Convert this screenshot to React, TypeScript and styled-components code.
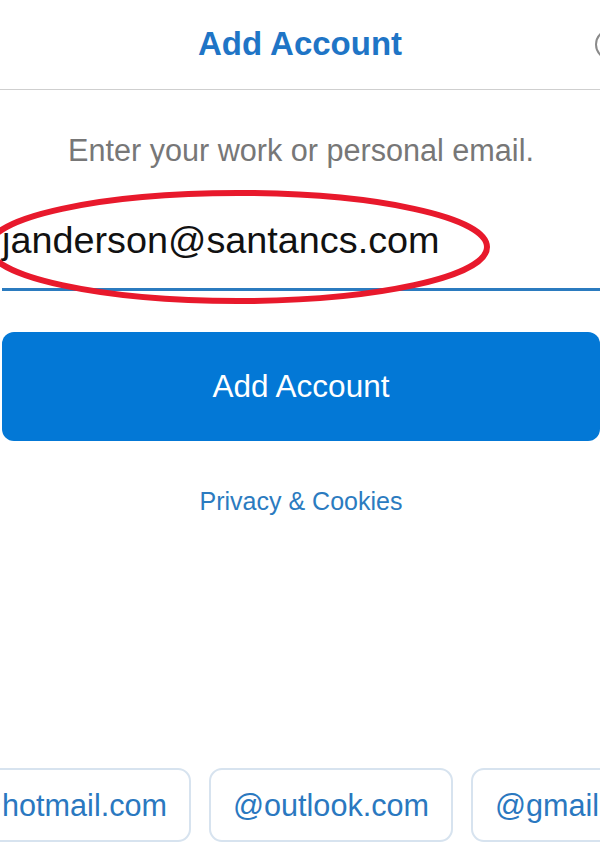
import React from "react";
import styled, { createGlobalStyle } from "styled-components";

const Global = createGlobalStyle`
  html, body { margin: 0; padding: 0; background: #fff; }
  body { font-family: "Liberation Sans", Arial, sans-serif; overflow: hidden; }
  * { box-sizing: border-box; }
`;

const Page = styled.div`
  width: 600px;
  height: 854px;
  display: flex;
  flex-direction: column;
  overflow: hidden;
  position: relative;
`;

const Header = styled.header`
  height: 90px;
  border-bottom: 1px solid #cfcfcf;
  display: flex;
  align-items: center;
  justify-content: center;
  position: relative;
`;

const Title = styled.h1`
  margin: 0;
  font-size: 33px;
  font-weight: 700;
  color: #1f75c6;
  margin-top: -1px;
`;

const HelpButton = styled.div`
  position: absolute;
  right: -26px;
  top: 29px;
  width: 31px;
  height: 31px;
  border-radius: 50%;
  border: 2px solid #8a8a8a;
`;

const Body = styled.main`
  display: flex;
  flex-direction: column;
  padding: 0 0 0 2px;
`;

const Prompt = styled.p`
  margin: 42px 0 0;
  text-align: center;
  font-size: 30.6px;
  color: #777;
  line-height: 36px;
`;

const Field = styled.div`
  position: relative;
  margin-top: 33px;
  height: 90px;
  padding-bottom: 9px;
  border-bottom: 3px solid #2b7bbf;
  display: flex;
  align-items: center;
`;

const EmailText = styled.span`
  font-size: 37.8px;
  color: #111;
`;

const Annotation = styled.svg`
  position: absolute;
  left: -2px;
  top: 0;
  overflow: visible;
  pointer-events: none;
`;

const PrimaryButton = styled.button`
  margin-top: 41px;
  height: 109px;
  width: 100%;
  border: none;
  border-radius: 12px;
  background: #0378d6;
  color: #fff;
  font-family: inherit;
  font-size: 31.5px;
`;

const LinkText = styled.a`
  margin-top: 46px;
  align-self: center;
  font-size: 25px;
  color: #2b7bc0;
  text-decoration: none;
`;

const ChipRow = styled.div`
  margin-top: auto;
  margin-bottom: 12px;
  display: flex;
  gap: 18px;
  margin-left: -53px;
`;

const Chip = styled.div`
  flex: none;
  height: 74px;
  padding: 0 22px;
  border: 2px solid #d7e3ef;
  border-radius: 13px;
  display: flex;
  align-items: center;
  font-size: 30.6px;
  color: #2a78c0;
`;

export default function App() {
  return (
    <Page>
      <Global />
      <Header>
        <Title>Add Account</Title>
        <HelpButton />
      </Header>
      <Body>
        <Prompt>Enter your work or personal email.</Prompt>
        <Field>
          <EmailText>janderson@santancs.com</EmailText>
          <Annotation width="1" height="1">
            <ellipse cx="238" cy="46" rx="249" ry="54" fill="none" stroke="#e8192c" strokeWidth="6" />
          </Annotation>
        </Field>
        <PrimaryButton>Add Account</PrimaryButton>
        <LinkText>Privacy &amp; Cookies</LinkText>
      </Body>
      <ChipRow>
        <Chip>@hotmail.com</Chip>
        <Chip>@outlook.com</Chip>
        <Chip>@gmail.com</Chip>
      </ChipRow>
    </Page>
  );
}
